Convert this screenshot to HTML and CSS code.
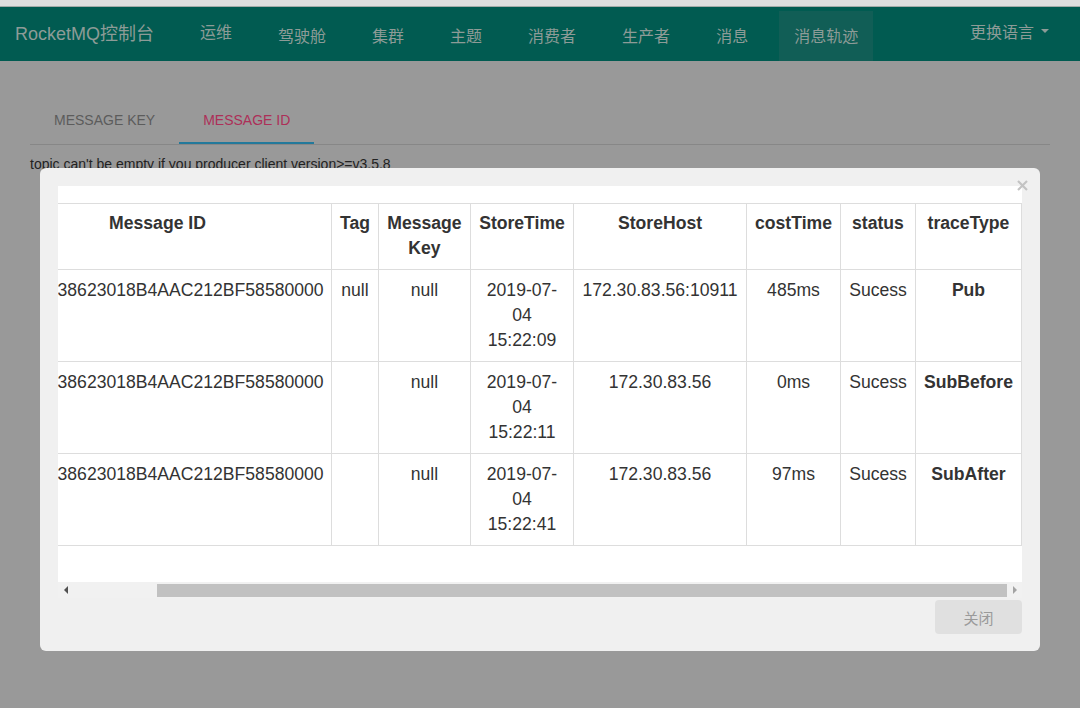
FILE: index.html
```html
<!DOCTYPE html>
<html lang="zh-CN">
<head>
<meta charset="utf-8">
<title>RocketMQ控制台</title>
<link rel="stylesheet" href="styles.css">
</head>
<body>
<div class="topbar"></div>
<nav class="navbar">
  <a class="brand">RocketMQ控制台</a>
  <ul class="nav">
    <li class="ops">运维</li>
    <li>驾驶舱</li>
    <li>集群</li>
    <li>主题</li>
    <li>消费者</li>
    <li>生产者</li>
    <li>消息</li>
    <li class="active">消息轨迹</li>
  </ul>
  <div class="lang">更换语言<span class="caret"></span></div>
</nav>

<main class="main">
  <ul class="tabs">
    <li>MESSAGE KEY</li>
    <li class="active">MESSAGE ID</li>
  </ul>
  <p class="hint">topic can't be empty if you producer client version&gt;=v3.5.8</p>
</main>

<div class="modal">
  <svg class="modal-x" width="11" height="11" viewBox="0 0 11 11" aria-label="close">
    <path d="M1 1 L10 10 M10 1 L1 10" stroke="#c3c3c3" stroke-width="2.2" stroke-linecap="butt" fill="none"/>
  </svg>
  <div class="trace-box">
    <div class="viewport">
      <table class="trace-table">
        <colgroup>
          <col class="c-id"><col class="c-tag"><col class="c-key"><col class="c-time">
          <col class="c-host"><col class="c-cost"><col class="c-status"><col class="c-type">
        </colgroup>
        <thead>
          <tr>
            <th>Message ID</th><th>Tag</th><th>Message Key</th><th>StoreTime</th>
            <th>StoreHost</th><th>costTime</th><th>status</th><th>traceType</th>
          </tr>
        </thead>
        <tbody>
          <tr>
            <td>AC1E5338623018B4AAC212BF58580000</td><td>null</td><td>null</td>
            <td>2019-07-<wbr>04 15:22:09</td><td>172.30.83.56:10911</td><td>485ms</td>
            <td>Sucess</td><td class="type">Pub</td>
          </tr>
          <tr>
            <td>AC1E5338623018B4AAC212BF58580000</td><td></td><td>null</td>
            <td>2019-07-<wbr>04 15:22:11</td><td>172.30.83.56</td><td>0ms</td>
            <td>Sucess</td><td class="type">SubBefore</td>
          </tr>
          <tr>
            <td>AC1E5338623018B4AAC212BF58580000</td><td></td><td>null</td>
            <td>2019-07-<wbr>04 15:22:41</td><td>172.30.83.56</td><td>97ms</td>
            <td>Sucess</td><td class="type">SubAfter</td>
          </tr>
        </tbody>
      </table>
    </div>
    <div class="hscroll">
      <span class="sb-btn"><span class="arrow-left"></span></span>
      <div class="track"><div class="thumb"></div></div>
      <span class="sb-btn"><span class="arrow-right"></span></span>
    </div>
  </div>
  <div class="modal-footer">
    <button class="btn-close">关闭</button>
  </div>
</div>
</body>
</html>
```

FILE: styles.css
```css
* { box-sizing: border-box; }
html, body { margin: 0; padding: 0; }
body {
  width: 1080px;
  height: 708px;
  overflow: hidden;
  position: relative;
  background: #999999;
  font-family: "Liberation Sans", "Noto Sans CJK SC", sans-serif;
}

.topbar {
  height: 7px;
  background: #dedede;
  border-bottom: 1px solid #a3aba8;
}

.navbar {
  height: 54px;
  background: #015b51;
  display: flex;
  align-items: flex-start;
  color: #8d9b97;
}
.brand {
  height: 54px;
  line-height: 54px;
  padding: 0 15px;
  font-size: 18px;
}
.nav {
  display: flex;
  gap: 16px;
  margin: 0 0 0 16px;
  padding: 0;
  list-style: none;
}
.nav li {
  height: 50px;
  margin-top: 4px;
  padding: 0 15px 2px;
  display: flex;
  align-items: center;
  font-size: 16px;
}
.nav li.ops { margin-top: 0; }
.nav li.active { background: #115e56; }
.lang {
  margin-left: auto;
  margin-right: 16px;
  height: 50px;
  padding: 0 15px 2px;
  display: flex;
  align-items: center;
  font-size: 16px;
}
.caret {
  display: inline-block;
  margin-left: 7px;
  border-top: 4px solid #8d9b97;
  border-left: 4px solid transparent;
  border-right: 4px solid transparent;
}

.main { padding: 37px 30px 0; }
.tabs {
  display: flex;
  list-style: none;
  margin: 0;
  padding: 0;
  border-bottom: 1px solid #878787;
}
.tabs li {
  padding: 0 24px;
  line-height: 44px;
  border-bottom: 2px solid transparent;
  font-size: 14px;
  color: #5c5c5c;
}
.tabs li.active {
  color: #ad2f58;
  border-bottom-color: #23799b;
}
.hint {
  margin: 9px 0 0;
  font-size: 14px;
  line-height: 20px;
  color: #222;
}

.modal {
  position: absolute;
  left: 40px;
  top: 168px;
  width: 1000px;
  height: 483px;
  background: #f0f0f0;
  border-radius: 6px;
  padding: 18px 18px 17px;
}
.modal-x {
  position: absolute;
  top: 12px;
  right: 12px;
}
.trace-box {
  background: #fff;
  padding-top: 17px;
}
.viewport { overflow: hidden; }
.trace-table {
  margin-left: -75px;
  margin-bottom: 36px;
  border-collapse: collapse;
  table-layout: fixed;
  width: 1038px;
  font-size: 17.6px;
  line-height: 25px;
  color: #333;
}
.trace-table th,
.trace-table td {
  border: 1px solid #dddddd;
  text-align: center;
  vertical-align: top;
  padding: 8px;
}
.trace-table th {
  padding: 7px 8px 8px;
  font-weight: bold;
}
.trace-table td.type { font-weight: bold; }
.trace-table tr > :first-child { border-left-color: transparent; }
.c-id { width: 348px; }
.c-tag { width: 47px; }
.c-key { width: 92px; }
.c-time { width: 103px; }
.c-host { width: 173px; }
.c-cost { width: 94px; }
.c-status { width: 75px; }
.c-type { width: 106px; }

.hscroll {
  display: flex;
  height: 16px;
  background: #f1f1f1;
}
.sb-btn {
  width: 15px;
  display: flex;
  align-items: center;
  justify-content: center;
}
.arrow-left {
  border-right: 4px solid #505050;
  border-top: 4px solid transparent;
  border-bottom: 4px solid transparent;
}
.arrow-right {
  border-left: 4px solid #a3a3a3;
  border-top: 4px solid transparent;
  border-bottom: 4px solid transparent;
}
.track {
  flex: 1;
  display: flex;
  justify-content: flex-end;
}
.thumb {
  width: 850px;
  height: 13px;
  margin-top: 2px;
  background: #c1c1c1;
}

.modal-footer {
  display: flex;
  justify-content: flex-end;
  margin-top: 2px;
}
.btn-close {
  width: 87px;
  height: 34px;
  border: 0;
  border-radius: 4px;
  background: #e0e0e0;
  color: #9a9a9a;
  font-family: "Noto Sans CJK SC", sans-serif;
  font-size: 15px;
  padding: 0;
}
```
